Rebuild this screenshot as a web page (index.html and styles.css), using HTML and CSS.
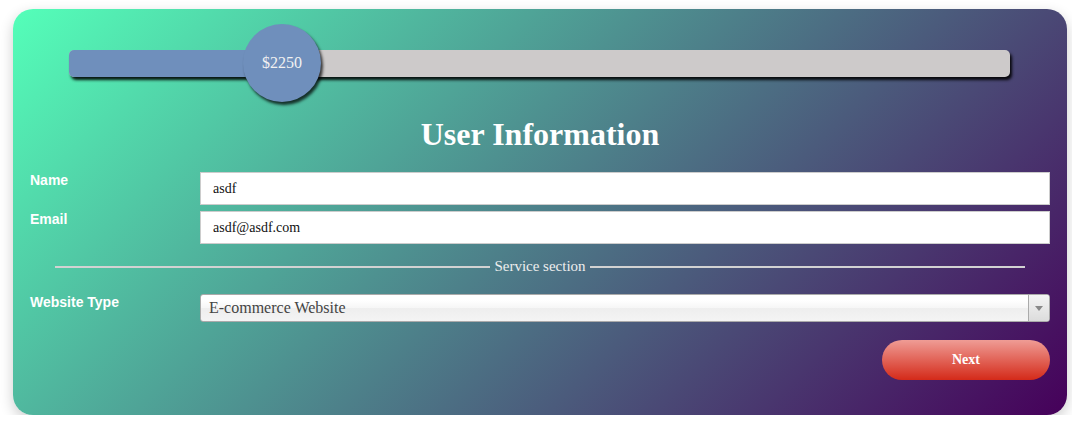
FILE: index.html
```
<!DOCTYPE html>
<html lang="en">
<head>
<meta charset="utf-8">
<title>User Information</title>
<link rel="stylesheet" href="styles.css">
</head>
<body>
<div class="card">
  <div class="slider">
    <div class="track">
      <div class="fill" style="width: 213px"></div>
    </div>
    <div class="thumb">$2250</div>
  </div>
  <h1 class="title">User Information</h1>
  <div class="fields">
    <label class="label" for="name">Name</label>
    <input class="input" id="name" type="text" value="asdf">
    <label class="label" for="email">Email</label>
    <input class="input" id="email" type="text" value="asdf@asdf.com">
  </div>
  <div class="divider"><span class="divider-line"></span><span class="divider-text">Service section</span><span class="divider-line"></span></div>
  <div class="fields fields-service">
    <span class="label">Website Type</span>
    <div class="select">
      <span class="select-value">E-commerce Website</span>
      <span class="select-arrow"><span class="caret"></span></span>
    </div>
  </div>
  <div class="actions">
    <button class="btn-next" type="button">Next</button>
  </div>
</div>
</body>
</html>
```
FILE: styles.css
```
html, body {
  margin: 0;
  background: #ffffff;
}
body {
  padding: 9px 5px 0 13px;
}
.card {
  width: 1054px;
  height: 406px;
  box-sizing: border-box;
  padding: 15px 17px 35px;
  border-radius: 20px;
  background: linear-gradient(135deg, #54ffb9, #46005a);
  box-shadow: 0 5px 14px rgba(0, 0, 0, 0.2);
  display: flex;
  flex-direction: column;
}
.slider {
  position: relative;
  height: 78px;
  margin: 0 40px 0 39px;
  display: flex;
  align-items: center;
}
.track {
  flex: 1;
  height: 27px;
  border-radius: 5px;
  background: #cdcaca;
  box-shadow: 2px 3px 3px rgba(0, 0, 0, 0.9);
  overflow: hidden;
}
.fill {
  height: 100%;
  background: #6f8fbc;
}
.thumb {
  position: absolute;
  left: 174px;
  top: 0;
  width: 78px;
  height: 78px;
  border-radius: 50%;
  background: #6f8fbc;
  box-shadow: 2px 3px 3px rgba(0, 0, 0, 0.75);
  display: flex;
  align-items: center;
  justify-content: center;
  color: #f2f2f2;
  font: 16px "Liberation Serif", serif;
}
.title {
  margin: 14px 0 20px;
  font: bold 32px/36px "Liberation Serif", serif;
  color: #ffffff;
  text-align: center;
}
.fields {
  display: grid;
  grid-template-columns: 170px 1fr;
  row-gap: 6px;
  align-items: start;
}
.label {
  font: bold 14px/16px "Liberation Sans", Arial, sans-serif;
  color: #ffffff;
}
.input {
  height: 33px;
  box-sizing: border-box;
  margin: 0;
  padding: 0 12px;
  border: 1px solid #cccccc;
  background: #ffffff;
  font: 14px "Liberation Serif", serif;
  color: #111111;
  outline: none;
}
.divider {
  margin: 14px 25px 0;
  display: flex;
  align-items: center;
  gap: 4px;
}
.divider-line {
  flex: 1;
  height: 2px;
  background: #d2d2d2;
}
.divider-text {
  font: 15px/17px "Liberation Serif", serif;
  color: #eeeeee;
}
.fields-service {
  margin-top: 19px;
}
.select {
  height: 28px;
  box-sizing: border-box;
  border: 1px solid #aaaaaa;
  border-radius: 3px;
  background: linear-gradient(#ffffff 20%, #f6f6f6 50%, #eeeeee 52%, #f4f4f4 100%);
  display: flex;
  align-items: center;
  overflow: hidden;
}
.select-value {
  flex: 1;
  padding-left: 8px;
  font: 16px "Liberation Serif", serif;
  color: #444444;
}
.select-arrow {
  width: 20px;
  align-self: stretch;
  border-left: 1px solid #aaaaaa;
  background: linear-gradient(#f4f4f4, #dcdcdc);
  display: flex;
  align-items: center;
  justify-content: center;
}
.caret {
  width: 0;
  height: 0;
  border-left: 4px solid transparent;
  border-right: 4px solid transparent;
  border-top: 5px solid #888888;
}
.actions {
  margin-top: 18px;
  display: flex;
  justify-content: flex-end;
}
.btn-next {
  width: 168px;
  height: 40px;
  border: none;
  border-radius: 20px;
  background: linear-gradient(#ef9c95, #d42a19);
  color: #ffffff;
  font: bold 14px "Liberation Serif", serif;
  padding: 0;
}
```
